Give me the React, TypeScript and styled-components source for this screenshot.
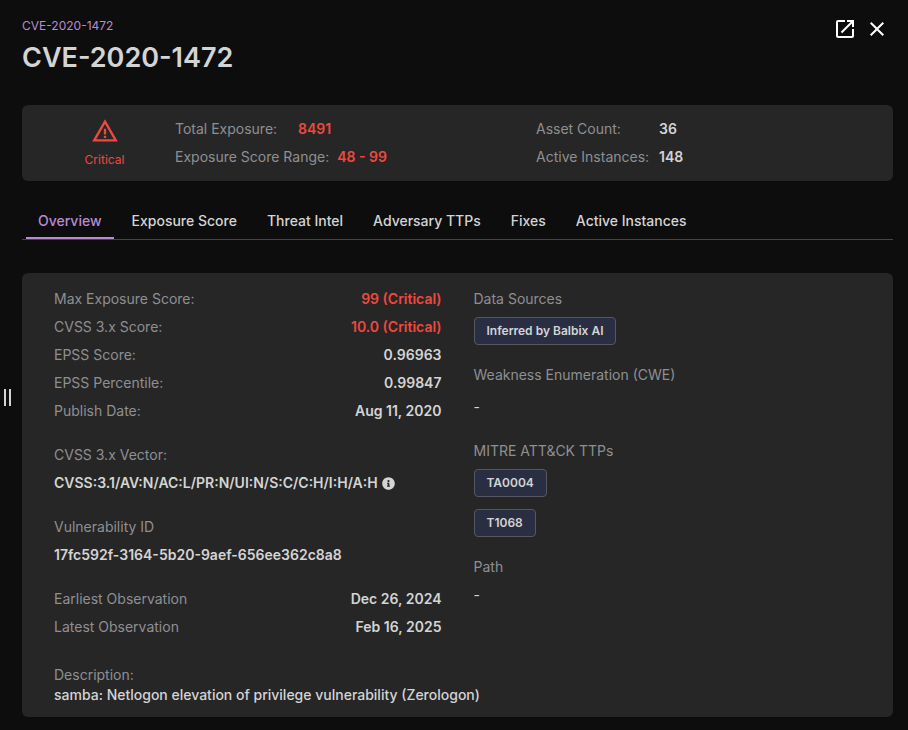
import React from "react";
import styled, { createGlobalStyle } from "styled-components";
import { MdClose, MdOpenInNew, MdWarningAmber } from "react-icons/md";
import { FaInfoCircle } from "react-icons/fa";

const color = {
  page: "#0d0d0d",
  card: "#262626",
  text: "#d4d4d4",
  muted: "#8f8f93",
  critical: "#f0483e",
  accent: "#b98ad2",
  line: "#454545",
  chip: "#2a2e42",
  chipLine: "#56575f",
};

const GlobalStyle = createGlobalStyle`
  * { box-sizing: border-box; }
  body {
    margin: 0;
    background: ${color.page};
    color: ${color.text};
    font-family: Inter, "Liberation Sans", sans-serif;
    font-size: 14px;
    line-height: 28px;
  }
  h1, p, dl, dd { margin: 0; }
  button { font: inherit; color: inherit; background: none; border: 0; padding: 0; cursor: pointer; }
`;

const Drawer = styled.div`
  display: flex;
  min-height: 100vh;
`;

const Gutter = styled.div`
  display: flex;
  flex: none;
  align-items: center;
  width: 22px;
  padding: 64px 0 0 4px;
`;

const ResizeHandle = styled.button`
  width: 7px;
  height: 17px;
  border: solid ${color.text};
  border-width: 0 2px;
  cursor: col-resize;
`;

const Content = styled.main`
  flex: 1;
  min-width: 0;
  padding: 16px 15px 13px 0;
`;

const Header = styled.header`
  display: flex;
  justify-content: space-between;
  align-items: flex-start;
  margin-bottom: 27px;
`;

const Crumb = styled.a`
  display: block;
  color: ${color.accent};
  font-size: 12px;
  line-height: 20px;
  text-decoration: none;
`;

const Title = styled.h1`
  font-size: 27px;
  font-weight: 600;
  line-height: 40px;
  margin-top: 2px;
`;

const Actions = styled.div`
  display: flex;
  gap: 8px;
  padding: 1px 4px 0 0;
`;

const IconButton = styled.button<{ $size: number }>`
  display: flex;
  color: #fff;
  svg {
    width: ${(p) => p.$size}px;
    height: ${(p) => p.$size}px;
  }
`;

const Card = styled.section`
  background: ${color.card};
  border-radius: 6px;
`;

const Summary = styled(Card)`
  display: grid;
  grid-template-columns: 141px 1fr;
  padding: 10px 0 10px 12px;
`;

const Severity = styled.div`
  display: flex;
  flex-direction: column;
  align-items: center;
  padding-top: 2px;
  color: ${color.critical};
  font-size: 12px;
  line-height: 20px;
  svg {
    width: 28px;
    height: 28px;
    margin-bottom: 5px;
  }
`;

const Stats = styled.dl`
  display: grid;
  grid-template-columns: 1fr 1fr;
  column-gap: 4px;
`;

const Stat = styled.div`
  display: flex;
  gap: 8px;
  white-space: nowrap;
  dt {
    min-width: 115px;
  }
`;

const Label = styled.dt`
  color: ${color.muted};
`;

const Value = styled.dd<{ $critical?: boolean }>`
  display: flex;
  align-items: center;
  gap: 4px;
  font-weight: 600;
  color: ${(p) => (p.$critical ? color.critical : color.text)};
`;

const Tabs = styled.nav`
  display: flex;
  gap: 6px;
  margin: 22px 0 33px;
  padding: 0 4px;
  border-bottom: 1px solid ${color.line};
`;

const Tab = styled.button<{ $active: boolean }>`
  padding: 4px 12px 2px;
  border-bottom: 2px solid ${(p) => (p.$active ? color.accent : "transparent")};
  color: ${(p) => (p.$active ? color.accent : color.text)};
  font-weight: 500;
  white-space: nowrap;
`;

const Details = styled(Card)`
  padding: 12px 32px;
`;

const Columns = styled.div`
  display: grid;
  grid-template-columns: 1fr 1fr;
  column-gap: 32px;
  margin-bottom: 24px;
`;

const Column = styled.div`
  display: flex;
  flex-direction: column;
  gap: 16px;
  min-width: 0;
`;

const Row = styled.div`
  display: flex;
  justify-content: space-between;
`;

const Chips = styled.dd`
  display: flex;
  flex-direction: column;
  align-items: flex-start;
  gap: 12px;
  padding-top: 4px;
`;

const Chip = styled.span`
  padding: 0 12px;
  border: 1px solid ${color.chipLine};
  border-radius: 4px;
  background: ${color.chip};
  font-size: 12px;
  font-weight: 600;
  line-height: 26px;
`;

const Description = styled.dl`
  line-height: 20px;
  dd {
    font-weight: 500;
  }
`;

const stats = [
  { label: "Total Exposure:", value: "8491", critical: true },
  { label: "Asset Count:", value: "36" },
  { label: "Exposure Score Range:", value: "48 - 99", critical: true },
  { label: "Active Instances:", value: "148" },
];

const tabs = ["Overview", "Exposure Score", "Threat Intel", "Adversary TTPs", "Fixes", "Active Instances"];

const scores = [
  { label: "Max Exposure Score:", value: "99 (Critical)", critical: true },
  { label: "CVSS 3.x Score:", value: "10.0 (Critical)", critical: true },
  { label: "EPSS Score:", value: "0.96963" },
  { label: "EPSS Percentile:", value: "0.99847" },
  { label: "Publish Date:", value: "Aug 11, 2020" },
];

const observations = [
  { label: "Earliest Observation", value: "Dec 26, 2024" },
  { label: "Latest Observation", value: "Feb 16, 2025" },
];

type Item = { label: string; value: string; critical?: boolean };

function Rows({ items }: { items: Item[] }) {
  return (
    <dl>
      {items.map((item) => (
        <Row key={item.label}>
          <Label>{item.label}</Label>
          <Value $critical={item.critical}>{item.value}</Value>
        </Row>
      ))}
    </dl>
  );
}

function ChipGroup({ label, items }: { label: string; items: string[] }) {
  return (
    <dl>
      <Label>{label}</Label>
      <Chips>{items.length ? items.map((item) => <Chip key={item}>{item}</Chip>) : "-"}</Chips>
    </dl>
  );
}

export default function App() {
  const [active, setActive] = React.useState(tabs[0]);
  return (
    <Drawer>
      <GlobalStyle />
      <Gutter>
        <ResizeHandle aria-label="Resize panel" />
      </Gutter>
      <Content>
        <Header>
          <div>
            <Crumb href="#">CVE-2020-1472</Crumb>
            <Title>CVE-2020-1472</Title>
          </div>
          <Actions>
            <IconButton $size={24} aria-label="Open in new tab">
              <MdOpenInNew />
            </IconButton>
            <IconButton $size={24} aria-label="Close">
              <MdClose />
            </IconButton>
          </Actions>
        </Header>

        <Summary>
          <Severity>
            <MdWarningAmber />
            Critical
          </Severity>
          <Stats>
            {stats.map((item) => (
              <Stat key={item.label}>
                <Label>{item.label}</Label>
                <Value $critical={item.critical}>{item.value}</Value>
              </Stat>
            ))}
          </Stats>
        </Summary>

        <Tabs role="tablist">
          {tabs.map((tab) => (
            <Tab key={tab} role="tab" aria-selected={tab === active} $active={tab === active} onClick={() => setActive(tab)}>
              {tab}
            </Tab>
          ))}
        </Tabs>

        <Details>
          <Columns>
            <Column>
              <Rows items={scores} />
              <dl>
                <Label>CVSS 3.x Vector:</Label>
                <Value>
                  CVSS:3.1/AV:N/AC:L/PR:N/UI:N/S:C/C:H/I:H/A:H
                  <IconButton $size={13} aria-label="About this vector">
                    <FaInfoCircle color={color.text} />
                  </IconButton>
                </Value>
              </dl>
              <dl>
                <Label>Vulnerability ID</Label>
                <Value>17fc592f-3164-5b20-9aef-656ee362c8a8</Value>
              </dl>
              <Rows items={observations} />
            </Column>
            <Column>
              <ChipGroup label="Data Sources" items={["Inferred by Balbix AI"]} />
              <ChipGroup label="Weakness Enumeration (CWE)" items={[]} />
              <ChipGroup label="MITRE ATT&CK TTPs" items={["TA0004", "T1068"]} />
              <dl>
                <Label>Path</Label>
                <dd>-</dd>
              </dl>
            </Column>
          </Columns>
          <Description>
            <Label>Description:</Label>
            <dd>samba: Netlogon elevation of privilege vulnerability (Zerologon)</dd>
          </Description>
        </Details>
      </Content>
    </Drawer>
  );
}
